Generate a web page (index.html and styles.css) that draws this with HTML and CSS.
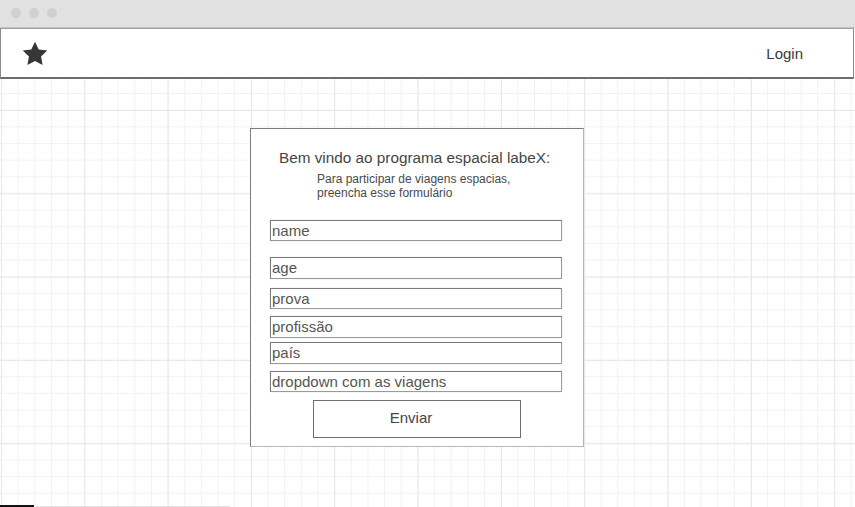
FILE: index.html
```html
<!DOCTYPE html>
<html lang="pt">
<head>
<meta charset="utf-8">
<title>labeX</title>
<link rel="stylesheet" href="styles.css">
</head>
<body>
<div class="window">
  <div class="chrome">
    <span class="dot"></span><span class="dot"></span><span class="dot"></span>
  </div>
  <header class="topbar">
    <svg class="star" viewBox="0 0 24 24" aria-hidden="true"><path d="M12 1.5l3.2 6.6 7.3 1-5.3 5.1 1.3 7.2L12 18l-6.5 3.4 1.3-7.2L1.5 9.1l7.3-1z"/></svg>
    <span class="login">Login</span>
  </header>
  <main class="canvas">
    <form class="card">
      <h1 class="title">Bem vindo ao programa espacial labeX:</h1>
      <p class="subtitle">Para participar de viagens espacias,<br>preencha esse formulário</p>
      <div class="field f-name">name</div>
      <div class="field f-age">age</div>
      <div class="field f-prova">prova</div>
      <div class="field f-prof">profissão</div>
      <div class="field f-pais">país</div>
      <div class="field f-drop">dropdown com as viagens</div>
      <div class="button">Enviar</div>
    </form>
    <div class="scrollbar"><span class="thumb"></span><span class="track"></span></div>
  </main>
</div>
</body>
</html>
```

FILE: styles.css
```css
* { box-sizing: border-box; }
html, body { margin: 0; padding: 0; }
body {
  font-family: "Liberation Sans", Arial, sans-serif;
  background: #fff;
  width: 855px;
  height: 507px;
  overflow: hidden;
}
.window {
  display: flex;
  flex-direction: column;
  width: 855px;
  height: 507px;
}
.chrome {
  height: 28px;
  background: #e1e1e1;
  border-bottom: 1px solid #c4c4c4;
  display: flex;
  align-items: center;
  gap: 8px;
  padding-left: 11px;
  padding-bottom: 1px;
}
.dot {
  width: 10px;
  height: 10px;
  border-radius: 50%;
  background: #d0d0d0;
}
.topbar {
  height: 51px;
  width: 854px;
  background: #fff;
  border: 1px solid #8a8a8a;
  border-bottom: 2px solid #6e6e6e;
  border-top-color: #a0a0a0;
  display: flex;
  align-items: center;
  justify-content: space-between;
  padding: 0 50px 0 20px;
}
.star {
  width: 28px;
  height: 28px;
  fill: #363636;
  margin-top: 1px;
}
.login {
  font-size: 15px;
  color: #3a3a3a;
}
.canvas {
  flex: 1;
  display: flex;
  flex-direction: column;
  background-color: #fff;
  background-image:
    linear-gradient(to right, #e8e8e8 1px, transparent 1px),
    linear-gradient(to bottom, #e8e8e8 1px, transparent 1px),
    linear-gradient(to right, #f2f2f2 1px, transparent 1px),
    linear-gradient(to bottom, #f2f2f2 1px, transparent 1px);
  background-size: 83.333px 83.333px, 83.333px 83.333px, 16.667px 16.667px, 16.667px 16.667px;
  background-position: 1px 0, 0 31px, 1px 0, 0 14px;
}
.card {
  margin: 49px 0 0 250px;
  width: 334px;
  height: 319px;
  background: #fff;
  border: 1px solid #7c7c7c;
  border-right-color: #b4b4b4;
  border-bottom-color: #b8b8b8;
  display: flex;
  flex-direction: column;
  padding: 20px 0 0 19px;
}
.title {
  margin: 0 0 0 9px;
  font-size: 15.3px;
  line-height: 18px;
  font-weight: normal;
  color: #454545;
}
.subtitle {
  margin: 5px 0 0 47px;
  font-size: 12px;
  line-height: 14px;
  color: #4a4a4a;
}
.field {
  width: 292px;
  height: 21px;
  border: 1px solid #7a7a7a;
  border-right-color: #9a9a9a;
  border-bottom-color: #9a9a9a;
  box-shadow: 0 0 1px #cfcfcf;
  font-size: 15px;
  line-height: 19px;
  color: #555;
  padding: 0 1px;
}
.f-name { margin-top: 20px; }
.f-age { margin-top: 16px; height: 22px; line-height: 20px; }
.f-prova { margin-top: 9px; }
.f-prof { margin-top: 7px; height: 22px; line-height: 20px; }
.f-pais { margin-top: 4px; height: 22px; line-height: 20px; }
.f-drop { margin-top: 7px; }
.button {
  margin: 8px 0 0 43px;
  width: 208px;
  height: 38px;
  border: 1px solid #6e6e6e;
  display: flex;
  align-items: center;
  justify-content: center;
  padding: 0 12px 3px 0;
  font-size: 15px;
  color: #454545;
}
.scrollbar {
  margin-top: auto;
  display: flex;
  align-items: flex-end;
  gap: 2px;
  height: 2px;
}
.thumb {
  width: 34px;
  height: 2px;
  background: #111;
}
.track {
  width: 194px;
  height: 1px;
  background: #e0e0e0;
}
```
